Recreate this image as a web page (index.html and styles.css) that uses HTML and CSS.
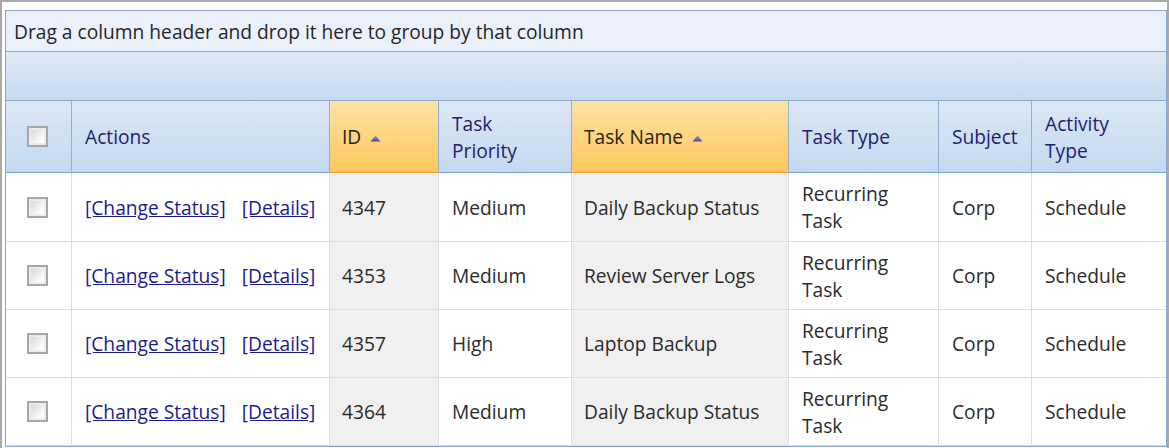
FILE: index.html
```html
<!DOCTYPE html>
<html>
<head>
<meta charset="utf-8">
<title>Tasks</title>
<link rel="stylesheet" href="styles.css">
</head>
<body>
<div class="frame">
  <div class="grid">
    <div class="group-panel">Drag a column header and drop it here to group by that column</div>
    <div class="band"></div>

    <div class="row head">
      <div class="cell check"><span class="box"></span></div>
      <div class="cell">Actions</div>
      <div class="cell sorted">ID <svg class="arrow" width="11" height="7" viewBox="0 0 11 7"><defs><linearGradient id="ag" x1="0" y1="0" x2="0" y2="1"><stop offset="0" stop-color="#8b9cc6"/><stop offset="1" stop-color="#3f5187"/></linearGradient></defs><path d="M5.5 0.5 L10.5 6.5 L0.5 6.5 Z" fill="url(#ag)"/></svg></div>
      <div class="cell">Task<br>Priority</div>
      <div class="cell sorted">Task Name <svg class="arrow" width="11" height="7" viewBox="0 0 11 7"><path d="M5.5 0.5 L10.5 6.5 L0.5 6.5 Z" fill="url(#ag)"/></svg></div>
      <div class="cell">Task Type</div>
      <div class="cell">Subject</div>
      <div class="cell">Activity<br>Type</div>
    </div>

    <div class="row data first">
      <div class="cell check"><span class="box"></span></div>
      <div class="cell actions"><a href="#">[Change Status]</a><a href="#">[Details]</a></div>
      <div class="cell sorted">4347</div>
      <div class="cell">Medium</div>
      <div class="cell sorted">Daily Backup Status</div>
      <div class="cell">Recurring<br>Task</div>
      <div class="cell">Corp</div>
      <div class="cell">Schedule</div>
    </div>

    <div class="row data">
      <div class="cell check"><span class="box"></span></div>
      <div class="cell actions"><a href="#">[Change Status]</a><a href="#">[Details]</a></div>
      <div class="cell sorted">4353</div>
      <div class="cell">Medium</div>
      <div class="cell sorted">Review Server Logs</div>
      <div class="cell">Recurring<br>Task</div>
      <div class="cell">Corp</div>
      <div class="cell">Schedule</div>
    </div>

    <div class="row data">
      <div class="cell check"><span class="box"></span></div>
      <div class="cell actions"><a href="#">[Change Status]</a><a href="#">[Details]</a></div>
      <div class="cell sorted">4357</div>
      <div class="cell">High</div>
      <div class="cell sorted">Laptop Backup</div>
      <div class="cell">Recurring<br>Task</div>
      <div class="cell">Corp</div>
      <div class="cell">Schedule</div>
    </div>

    <div class="row data">
      <div class="cell check"><span class="box"></span></div>
      <div class="cell actions"><a href="#">[Change Status]</a><a href="#">[Details]</a></div>
      <div class="cell sorted">4364</div>
      <div class="cell">Medium</div>
      <div class="cell sorted">Daily Backup Status</div>
      <div class="cell">Recurring<br>Task</div>
      <div class="cell">Corp</div>
      <div class="cell">Schedule</div>
    </div>
  </div>
</div>
</body>
</html>
```

FILE: styles.css
```css
html, body {
  margin: 0;
  padding: 0;
  background: #ffffff;
}

body {
  font-family: "Open Sans", "Noto Sans", sans-serif;
  font-size: 19.2px;
  color: #2b2b2b;
}

.frame {
  box-sizing: border-box;
  width: 1169px;
  height: 448px;
  overflow: hidden;
  border-top: 2px solid #a9a9a9;
  border-left: 2px solid #a9a9a9;
  border-right: 2px solid #a9a9a9;
  padding: 8px 0 0 3px;
}

.grid {
  border: 1px solid #8ba8cb;
  background: #ffffff;
}

.group-panel {
  height: 40px;
  display: flex;
  align-items: center;
  padding-left: 8px;
  background: #eaf1fb;
  border-bottom: 1px solid #8ba8cb;
  color: #262626;
}

.band {
  height: 48px;
  background: linear-gradient(#dfe9f6, #c7daf0);
  border-bottom: 1px solid #8ba8cb;
}

.row {
  display: grid;
  grid-template-columns: 66px 258px 109px 133px 217px 150px 93px 134px;
}

.cell {
  box-sizing: border-box;
  display: flex;
  align-items: center;
  padding-left: 13px;
  line-height: 27px;
  white-space: nowrap;
}

.head .cell {
  height: 72px;
  background: linear-gradient(#dce7f5, #c3d9f0);
  border-right: 1px solid #8fb0d7;
  border-bottom: 1px solid #7fa3cf;
  color: #1f2170;
}

.head .cell.sorted {
  background: linear-gradient(#fee3a6, #fdc75c);
  border-bottom-color: #f4a13a;
  color: #2a2210;
  padding-left: 12px;
}

.head .cell:last-child,
.data .cell:last-child {
  border-right: none;
}

.arrow {
  margin-left: 9px;
  margin-top: 3px;
}

.data .cell {
  height: 68px;
  border-right: 1px solid #d6dee9;
  border-bottom: 1px solid #d6dee9;
}

.data.first .cell {
  height: 69px;
}

.data .cell.sorted {
  background: #f0f0f0;
  padding-left: 12px;
}

.cell.check {
  justify-content: center;
  padding-left: 0;
  padding-right: 2px;
}

.box {
  box-sizing: border-box;
  width: 21px;
  height: 21px;
  border: 2px solid #a6a6a6;
  box-shadow: inset 0 0 0 2px #ececec;
  background: linear-gradient(135deg, #cfcfcf, #ffffff 75%);
}

.actions a {
  color: #1c1c8e;
  text-decoration: underline;
  margin-right: 16px;
}
```
